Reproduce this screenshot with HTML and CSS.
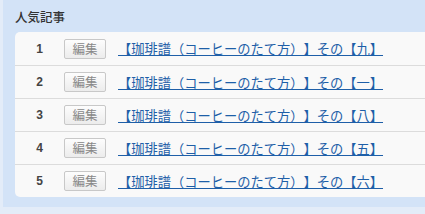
FILE: index.html
```html
<!DOCTYPE html>
<html lang="ja">
<head>
  <meta charset="UTF-8" />
  <title>人気記事</title>
  <link rel="stylesheet" href="styles.css">
</head>
<body>
  <div class="widget">
    <h3 class="widget-title">人気記事</h3>
    <ul class="ranking">
      <li class="rank-row"><span class="rank-num">1</span><button class="edit-btn">編集</button><a href="#">【珈琲譜（コーヒーのたて方）】その【九】</a></li>
      <li class="rank-row"><span class="rank-num">2</span><button class="edit-btn">編集</button><a href="#">【珈琲譜（コーヒーのたて方）】その【一】</a></li>
      <li class="rank-row"><span class="rank-num">3</span><button class="edit-btn">編集</button><a href="#">【珈琲譜（コーヒーのたて方）】その【八】</a></li>
      <li class="rank-row"><span class="rank-num">4</span><button class="edit-btn">編集</button><a href="#">【珈琲譜（コーヒーのたて方）】その【五】</a></li>
      <li class="rank-row"><span class="rank-num">5</span><button class="edit-btn">編集</button><a href="#">【珈琲譜（コーヒーのたて方）】その【六】</a></li>
    </ul>
  </div>
</body>
</html>
```

FILE: styles.css
```css
body {
  margin: 0;
  background: #e3ecf8;
  font-family: "Noto Sans CJK JP", "Liberation Sans", sans-serif;
  text-spacing-trim: space-all;
  overflow: hidden;
}
.widget {
  margin-left: 3px;
  width: 440px;
  height: 207px;
  background: #d3e3f7;
  padding: 0 0 0 12px;
  box-sizing: border-box;
}
.widget-title {
  margin: 0;
  height: 32px;
  line-height: 34px;
  font-size: 12.5px;
  font-weight: 500;
  color: #333;
}
.ranking {
  list-style: none;
  margin: 0;
  padding: 0;
  background: #f9f9f9;
  border-radius: 5px 0 0 5px;
}
.rank-row {
  display: flex;
  align-items: center;
  height: 33px;
  border-top: 1px solid #dcdcdc;
  box-sizing: border-box;
}
.rank-row:first-child {
  border-top: none;
}
.rank-num {
  width: 49px;
  text-align: center;
  font-family: "Liberation Sans", sans-serif;
  font-weight: bold;
  font-size: 12px;
  color: #444;
}
.edit-btn {
  width: 42px;
  height: 20px;
  padding: 0;
  border: 1px solid #c8c8c8;
  border-radius: 2px;
  background: linear-gradient(#fdfdfd, #ececec);
  font-family: "Noto Sans CJK JP", sans-serif;
  font-size: 12.5px;
  color: #888;
  line-height: 18px;
}
.rank-row a {
  margin-left: 12px;
  font-size: 13.25px;
  color: #1e5fa8;
  text-decoration: underline;
  white-space: nowrap;
}
```
